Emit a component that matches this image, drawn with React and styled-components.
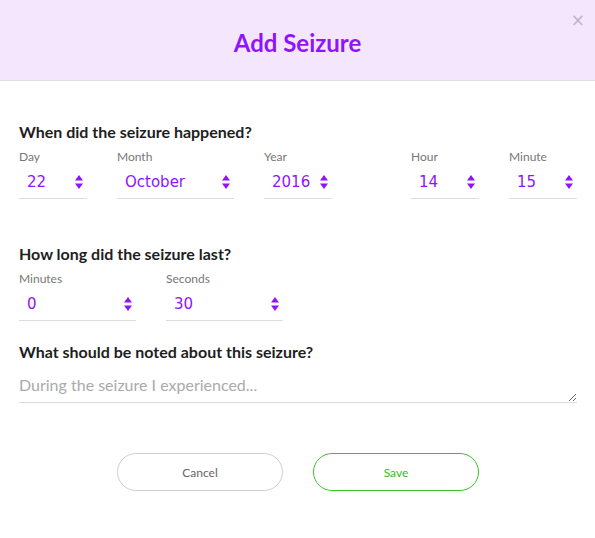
import React from 'react'
import styled, { createGlobalStyle } from 'styled-components'

const Global = createGlobalStyle`
    body {
        margin: 0;
        background: #fff;
        font-family: Lato, "Open Sans", sans-serif;
    }
`

const Modal = styled.div`
    width: 595px;
    height: 538px;
    background: #fff;
    display: flex;
    flex-direction: column;
`

const Header = styled.div`
    position: relative;
    height: 80px;
    background: #f4e6fd;
    border-bottom: 1px solid #e4e0e6;
    display: flex;
    align-items: center;
    justify-content: center;
`

const Title = styled.h1`
    margin: 5px 0 0;
    font-size: 24px;
    font-weight: 700;
    color: #9013fe;
`

const Close = styled.button`
    position: absolute;
    top: 12px;
    right: 10px;
    border: none;
    background: none;
    padding: 0;
    font-size: 17px;
    line-height: 17px;
    color: #bdb6c2;
    cursor: pointer;
    font-family: "DejaVu Sans", sans-serif;
`

const Body = styled.div`
    padding: 41px 18px 0 19px;
    display: flex;
    flex-direction: column;
`

const Question = styled.h2`
    margin: 0;
    font-size: 16px;
    line-height: 20px;
    font-weight: 700;
    color: #1e1e1e;
`

const Section = styled.div`
    margin-bottom: ${({ $gap }) => $gap}px;
`

const Row = styled.div`
    display: flex;
    justify-content: space-between;
`

const Group = styled.div`
    display: flex;
    gap: 30px;
`

const Field = styled.label`
    display: flex;
    flex-direction: column;
    width: ${({ $w }) => $w}px;
`

const Label = styled.span`
    margin-top: 7px;
    font-size: 12px;
    line-height: 15px;
    color: #777;
`

const SelectWrap = styled.div`
    position: relative;
    margin-top: 2px;
    border-bottom: 1px solid #ddd;
`

const Select = styled.select`
    appearance: none;
    width: 100%;
    height: 32px;
    border: none;
    background: transparent;
    padding: 0 20px 1px 8px;
    font-family: "DejaVu Sans", Verdana, sans-serif;
    font-size: 15px;
    color: #9013fe;
    outline: none;
`

const Arrows = styled.svg`
    position: absolute;
    right: 4px;
    top: 9px;
    pointer-events: none;
`

const Notes = styled.textarea`
    display: block;
    box-sizing: border-box;
    width: 100%;
    height: 35px;
    margin-top: 6px;
    border: none;
    border-bottom: 1px solid #ddd;
    padding: 7px 0 0 0;
    font-family: Lato, sans-serif;
    font-size: 16px;
    color: #333;
    resize: vertical;
    outline: none;
    &::placeholder {
        color: #aaa;
    }
`

const Buttons = styled.div`
    display: flex;
    justify-content: center;
    gap: 30px;
    margin-top: 50px;
`

const Button = styled.button`
    width: 166px;
    height: 38px;
    border-radius: 19px;
    background: #fff;
    border: 1px solid ${({ $primary }) => ($primary ? '#3ec22a' : '#cfcfcf')};
    color: ${({ $primary }) => ($primary ? '#3bb81f' : '#666')};
    font-family: Lato, sans-serif;
    font-size: 12px;
    cursor: pointer;
`

const ArrowIcon = () => (
    <Arrows width="8" height="14" viewBox="0 0 8 14">
        <path d="M4 0 L8 5.5 H0 Z" fill="#9013fe" />
        <path d="M4 14 L8 8.5 H0 Z" fill="#9013fe" />
    </Arrows>
)

const days = Array.from({ length: 31 }, (_, i) => i + 1)
const months = ['January', 'February', 'March', 'April', 'May', 'June', 'July', 'August', 'September', 'October', 'November', 'December']
const years = [2014, 2015, 2016, 2017]
const range = (n) => Array.from({ length: n }, (_, i) => i)

const Dropdown = ({ label, width, value, options }) => (
    <Field $w={width}>
        <Label>{label}</Label>
        <SelectWrap>
            <Select defaultValue={value}>
                {options.map((o) => (
                    <option key={o} value={o}>{o}</option>
                ))}
            </Select>
            <ArrowIcon />
        </SelectWrap>
    </Field>
)

export default function App() {
    return (
        <>
            <Global />
            <Modal>
                <Header>
                    <Title>Add Seizure</Title>
                    <Close aria-label="Close">×</Close>
                </Header>
                <Body>
                    <Section $gap={45}>
                        <Question>When did the seizure happened?</Question>
                        <Row>
                            <Group>
                                <Dropdown label="Day" width={68} value={22} options={days} />
                                <Dropdown label="Month" width={117} value="October" options={months} />
                                <Dropdown label="Year" width={68} value={2016} options={years} />
                            </Group>
                            <Group>
                                <Dropdown label="Hour" width={68} value={14} options={range(24)} />
                                <Dropdown label="Minute" width={68} value={15} options={range(60)} />
                            </Group>
                        </Row>
                    </Section>
                    <Section $gap={21}>
                        <Question>How long did the seizure last?</Question>
                        <Group>
                            <Dropdown label="Minutes" width={117} value={0} options={range(60)} />
                            <Dropdown label="Seconds" width={117} value={30} options={range(60)} />
                        </Group>
                    </Section>
                    <Section $gap={0}>
                        <Question>What should be noted about this seizure?</Question>
                        <Notes placeholder="During the seizure I experienced..." />
                    </Section>
                    <Buttons>
                        <Button>Cancel</Button>
                        <Button $primary>Save</Button>
                    </Buttons>
                </Body>
            </Modal>
        </>
    )
}
